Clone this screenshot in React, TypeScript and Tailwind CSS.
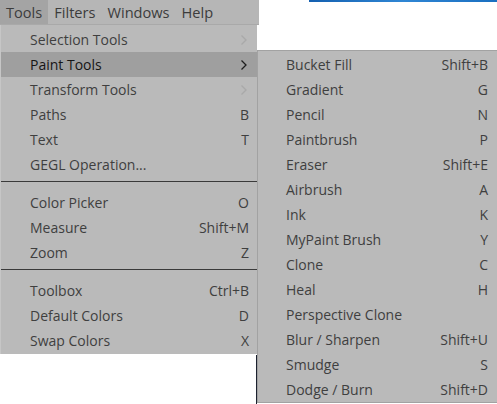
import React from "react";

type Item = { label: string; key?: string; sub?: boolean; disabled?: boolean; active?: boolean } | "sep";

const tools: Item[] = [
  { label: "Selection Tools", sub: true, disabled: true },
  { label: "Paint Tools", sub: true, active: true },
  { label: "Transform Tools", sub: true, disabled: true },
  { label: "Paths", key: "B" },
  { label: "Text", key: "T" },
  { label: "GEGL Operation..." },
  "sep",
  { label: "Color Picker", key: "O" },
  { label: "Measure", key: "Shift+M" },
  { label: "Zoom", key: "Z" },
  "sep",
  { label: "Toolbox", key: "Ctrl+B" },
  { label: "Default Colors", key: "D" },
  { label: "Swap Colors", key: "X" },
];

const paint: Item[] = [
  { label: "Bucket Fill", key: "Shift+B" },
  { label: "Gradient", key: "G" },
  { label: "Pencil", key: "N" },
  { label: "Paintbrush", key: "P" },
  { label: "Eraser", key: "Shift+E" },
  { label: "Airbrush", key: "A" },
  { label: "Ink", key: "K" },
  { label: "MyPaint Brush", key: "Y" },
  { label: "Clone", key: "C" },
  { label: "Heal", key: "H" },
  { label: "Perspective Clone" },
  { label: "Blur / Sharpen", key: "Shift+U" },
  { label: "Smudge", key: "S" },
  { label: "Dodge / Burn", key: "Shift+D" },
];

function Chevron({ dim }: { dim?: boolean }) {
  return (
    <svg width="8" height="12" viewBox="0 0 8 12" className="mr-[1px]">
      <path d="M1.5 1.5 L6 6 L1.5 10.5" fill="none" stroke={dim ? "#a9a9a9" : "#1e1e1e"} strokeWidth="1.3" />
    </svg>
  );
}

function Row({ item, pad }: { item: Exclude<Item, "sep">; pad: string }) {
  return (
    <div
      className={`flex h-[25px] items-center justify-between ${pad} ${
        item.active ? "bg-[#9f9f9f] text-[#161616]" : "text-[#3f3f3f]"
      }`}
    >
      <span>{item.label}</span>
      {item.sub ? <Chevron dim={item.disabled} /> : <span>{item.key}</span>}
    </div>
  );
}

export default function App() {
  return (
    <div
      className="relative h-[404px] w-[497px] overflow-hidden bg-white text-[14px] leading-none"
      style={{ fontFamily: '"Open Sans", "Noto Sans", sans-serif' }}
    >
      {/* menubar */}
      <div className="flex h-[25px]">
        <div className="flex w-[259px] items-stretch border-b border-[#a9a9a9] bg-[#b6b6b6] text-[14.6px] text-[#3c3c3c]">
          <div className="flex items-center bg-[#a4a4a4] px-[6px]">Tools</div>
          <div className="flex items-center pl-[6px]">Filters</div>
          <div className="flex items-center pl-[12px]">Windows</div>
          <div className="flex items-center pl-[12px]">Help</div>
        </div>
        <div className="flex-1">
          <div className="ml-[50px] h-[2px] bg-gradient-to-r from-[#1460b0] via-[#2f86d4] to-[#1a6fc0]" />
        </div>
      </div>

      {/* Tools menu */}
      <div className="w-[257px] border-l border-[#c6c6c6] bg-[#bababa] pt-[2px] pb-[1px]">
        {tools.map((it, i) =>
          it === "sep" ? (
            <div key={i} className="h-[13px] pt-[4px]">
              <div className="h-[1px] bg-[#3a3a3a]" />
            </div>
          ) : (
            <Row key={i} item={it} pad="pl-[29px] pr-[8px]" />
          )
        )}
      </div>

      {/* window edge under the Tools menu */}
      <div className="absolute left-[256px] top-[355px] h-[49px] w-[1px] bg-[#1c2230]" />

      {/* Paint Tools submenu */}
      <div className="absolute left-[257px] top-[50px] w-[245px] border border-[#a2a2a2] bg-[#bababa] pt-[1px]">
        {paint.map((it, i) =>
          it === "sep" ? null : <Row key={i} item={it} pad="pl-[28px] pr-[13px]" />
        )}
      </div>
    </div>
  );
}
